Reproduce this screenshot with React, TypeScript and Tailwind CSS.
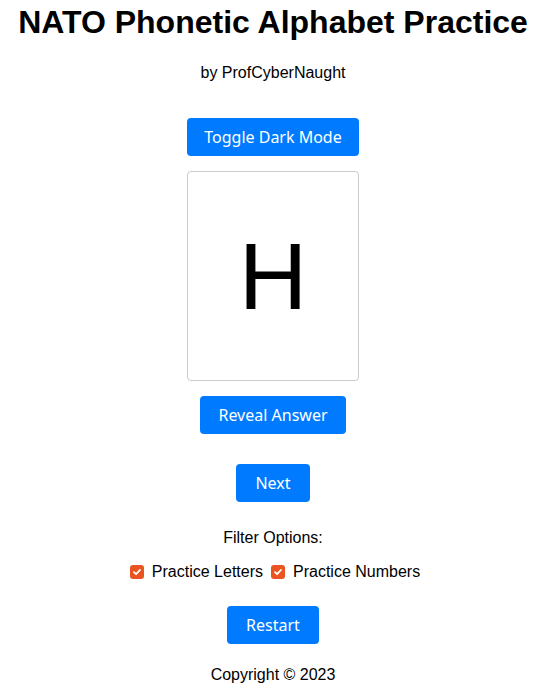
import React from "react";

function Check() {
  return (
    <span className="inline-flex h-[14px] w-[14px] items-center justify-center rounded-[3px] bg-[#e95420]">
      <svg width="10" height="10" viewBox="0 0 10 10" fill="none">
        <path d="M2 5.2 L4.1 7.2 L8 2.9" stroke="white" strokeWidth="1.8" strokeLinecap="round" strokeLinejoin="round" />
      </svg>
    </span>
  );
}

function Btn({ children, w }: { children: React.ReactNode; w: string }) {
  return (
    <button
      className={`${w} h-[38px] rounded-[4px] bg-[#007bff] text-[16px] text-white font-['Noto_Sans',sans-serif]`}
    >
      {children}
    </button>
  );
}

export default function App() {
  return (
    <div className="flex flex-col items-center bg-white pl-[2px] text-black font-['Liberation_Sans',Arial,sans-serif]">
      <h1 className="mt-[4px] text-[32px] font-bold leading-[37px]">NATO Phonetic Alphabet Practice</h1>
      <p className="mt-[23px] text-[16px] leading-[18px]">by ProfCyberNaught</p>
      <div className="mt-[36px]">
        <Btn w="w-[172px]">Toggle Dark Mode</Btn>
      </div>
      <div className="mt-[15px] flex h-[210px] w-[172px] items-center justify-center rounded-[4px] border border-[#cccccc]">
        <span className="text-[95px] leading-none">H</span>
      </div>
      <div className="mt-[15px]">
        <Btn w="w-[146px]">Reveal Answer</Btn>
      </div>
      <div className="mt-[30px]">
        <Btn w="w-[74px]">Next</Btn>
      </div>
      <p className="mt-[27px] text-[16px] leading-[18px]">Filter Options:</p>
      <div className="mt-[16px] flex items-center pl-[4px] text-[16px] leading-[18px]">
        <Check />
        <span className="ml-[8px]">Practice Letters</span>
        <span className="ml-[8px]"><Check /></span>
        <span className="ml-[8px]">Practice Numbers</span>
      </div>
      <div className="mt-[25px]">
        <Btn w="w-[92px]">Restart</Btn>
      </div>
      <p className="mt-[22px] text-[16px] leading-[18px]">Copyright © 2023</p>
    </div>
  );
}
